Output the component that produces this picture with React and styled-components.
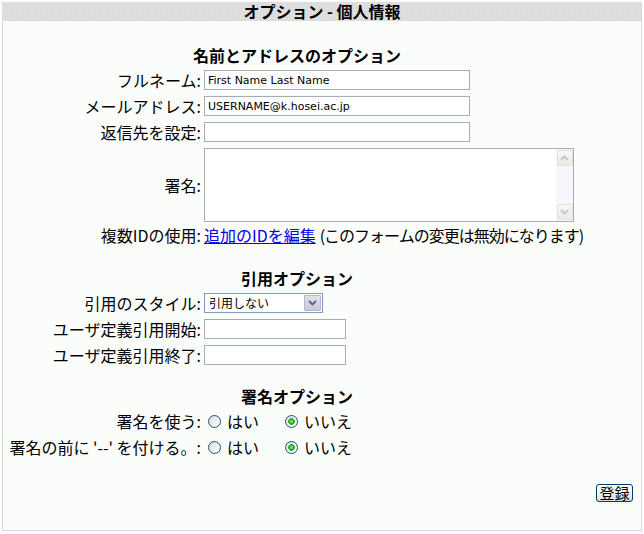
import React from 'react';
import styled, { createGlobalStyle } from 'styled-components';

const Global = createGlobalStyle`
  html, body { margin: 0; padding: 0; background: #ffffff; }
  body {
    font-family: "Noto Sans CJK JP", "Noto Sans", sans-serif;
    color: #000;
  }
`;

const Page = styled.div`
  width: 640px;
  margin: 2px 0 0 2px;
`;

const Header = styled.div`
  height: 19px;
  background-color: #dcdcdc;
  background-image: radial-gradient(circle, rgba(255,255,255,0.35) 0.6px, transparent 0.8px);
  background-size: 3px 3px;
  display: flex;
  align-items: center;
  justify-content: center;
  font-size: 16px;
  font-weight: 700;
  line-height: 19px;
`;

const Panel = styled.div`
  box-sizing: border-box;
  height: 510px;
  background: #fbfdfb;
  border: 1px solid #d6d8d6;
  border-top: none;
  padding-top: 24px;
  display: flex;
  flex-direction: column;
`;

const Section = styled.section`
  width: 588px;
  margin-top: ${p => p.$top || 0}px;
  display: flex;
  flex-direction: column;
`;

const Title = styled.h3`
  margin: 0 0 2px;
  height: 20px;
  line-height: 20px;
  font-size: 16px;
  font-weight: 700;
  text-align: center;
`;

const Row = styled.div`
  display: grid;
  grid-template-columns: 200px 388px;
  height: ${p => p.$h || 26}px;
  align-items: center;
`;

const Label = styled.div`
  text-align: right;
  padding-right: 2px;
  font-size: 16px;
  line-height: 20px;
  white-space: nowrap;
`;

const Value = styled.div`
  display: flex;
  align-items: center;
  padding-left: 1px;
  font-size: 16px;
  line-height: 20px;
  white-space: nowrap;
`;

const TextInput = styled.input`
  box-sizing: border-box;
  width: ${p => p.$w || 266}px;
  height: 20px;
  margin: 0;
  border: 1px solid #a5acb2;
  background: #fff;
  padding: 0 3px;
  font-family: "DejaVu Sans", sans-serif;
  font-size: 11px;
  color: #000;
  outline: none;
`;

const AreaBox = styled.div`
  box-sizing: border-box;
  width: 370px;
  height: 74px;
  border: 1px solid #a5acb2;
  background: #fff;
  display: flex;
`;

const Area = styled.textarea`
  flex: 1;
  border: none;
  outline: none;
  resize: none;
  margin: 0;
  padding: 2px;
  background: transparent;
  overflow: hidden;
`;

const ScrollTrack = styled.div`
  width: 17px;
  background: #f7f6fb;
  display: flex;
  flex-direction: column;
  justify-content: space-between;
  align-items: center;
  padding: 1px 0;
`;

const ScrollBtn = styled.div`
  box-sizing: border-box;
  width: 16px;
  height: 16px;
  border: 1px solid #e2e2dc;
  border-radius: 2px;
  background: linear-gradient(#f7f7f4, #ebebe6);
  display: flex;
  align-items: center;
  justify-content: center;
`;

const Link = styled.a`
  color: #0000ee;
  text-decoration: underline;
`;

const Note = styled.span`
  margin-left: 4px;
  letter-spacing: -1px;
`;

const SelectBox = styled.div`
  box-sizing: border-box;
  width: 119px;
  height: 20px;
  border: 1px solid #7f9db9;
  background: #fff;
  display: flex;
  align-items: center;
  justify-content: space-between;
  padding: 0 1px 0 4px;
  font-size: 12px;
  line-height: 16px;
`;

const SelectArrow = styled.span`
  box-sizing: border-box;
  width: 17px;
  height: 16px;
  border: 1px solid #b4b8cc;
  border-radius: 1px;
  background: linear-gradient(#e2e2ea, #c8c8d6);
  display: flex;
  align-items: center;
  justify-content: center;
`;

const RadioInput = styled.input.attrs({ type: 'radio' })`
  appearance: none;
  -webkit-appearance: none;
  box-sizing: border-box;
  width: 13px;
  height: 13px;
  margin: 0 0 0 ${p => p.$ml}px;
  border: 1px solid #1c5180;
  border-radius: 50%;
  background: linear-gradient(135deg, #dcdcd6, #ffffff);
  &:checked {
    background:
      radial-gradient(circle, #5fe25b 0 1.5px, #22a622 2px 3px, transparent 3.5px),
      linear-gradient(135deg, #dcdcd6, #ffffff);
  }
`;

const RadioText = styled.span`
  margin-left: 6px;
`;

const Footer = styled.div`
  display: flex;
  justify-content: flex-end;
  padding: 24px 8px 0 0;
`;

const Button = styled.button`
  box-sizing: border-box;
  width: 37px;
  height: 18px;
  padding: 0;
  border: 1px solid #003c74;
  border-radius: 3px;
  background: linear-gradient(#ffffff, #f0f0ea 60%, #d8d8e4);
  font-family: "Noto Sans CJK JP", sans-serif;
  font-size: 15px;
  line-height: 16px;
  color: #000;
`;

const Chevron = ({ up, color = '#c4c4c0' }) => (
  <svg width="9" height="6" viewBox="0 0 9 6">
    <polyline
      points={up ? '1,5 4.5,1.5 8,5' : '1,1 4.5,4.5 8,1'}
      fill="none"
      stroke={color}
      strokeWidth="1.8"
    />
  </svg>
);

const RadioPair = ({ name }) => (
  <Value>
    <RadioInput name={name} $ml={4} />
    <RadioText>はい</RadioText>
    <RadioInput name={name} $ml={26} defaultChecked />
    <RadioText>いいえ</RadioText>
  </Value>
);

export default function App() {
  return (
    <>
      <Global />
      <Page>
        <Header>オプション - 個人情報</Header>
        <Panel>
          <Section>
            <Title>名前とアドレスのオプション</Title>
            <Row>
              <Label>フルネーム:</Label>
              <Value><TextInput defaultValue="First Name Last Name" /></Value>
            </Row>
            <Row>
              <Label>メールアドレス:</Label>
              <Value><TextInput defaultValue="USERNAME@k.hosei.ac.jp" /></Value>
            </Row>
            <Row>
              <Label>返信先を設定:</Label>
              <Value><TextInput defaultValue="" /></Value>
            </Row>
            <Row $h={79}>
              <Label>署名:</Label>
              <Value>
                <AreaBox>
                  <Area />
                  <ScrollTrack>
                    <ScrollBtn><Chevron up /></ScrollBtn>
                    <ScrollBtn><Chevron /></ScrollBtn>
                  </ScrollTrack>
                </AreaBox>
              </Value>
            </Row>
            <Row $h={22}>
              <Label>複数IDの使用:</Label>
              <Value>
                <Link href="#">追加のIDを編集</Link>
                <Note>(このフォームの変更は無効になります)</Note>
              </Value>
            </Row>
          </Section>

          <Section $top={22}>
            <Title>引用オプション</Title>
            <Row>
              <Label>引用のスタイル:</Label>
              <Value>
                <SelectBox>
                  <span>引用しない</span>
                  <SelectArrow><Chevron color="#4d6185" /></SelectArrow>
                </SelectBox>
              </Value>
            </Row>
            <Row>
              <Label>ユーザ定義引用開始:</Label>
              <Value><TextInput $w={142} defaultValue="" /></Value>
            </Row>
            <Row>
              <Label>ユーザ定義引用終了:</Label>
              <Value><TextInput $w={142} defaultValue="" /></Value>
            </Row>
          </Section>

          <Section $top={18}>
            <Title>署名オプション</Title>
            <Row>
              <Label>署名を使う:</Label>
              <RadioPair name="use_sig" />
            </Row>
            <Row>
              <Label>署名の前に '--' を付ける。:</Label>
              <RadioPair name="prefix_sig" />
            </Row>
          </Section>

          <Footer>
            <Button>登録</Button>
          </Footer>
        </Panel>
      </Page>
    </>
  );
}
